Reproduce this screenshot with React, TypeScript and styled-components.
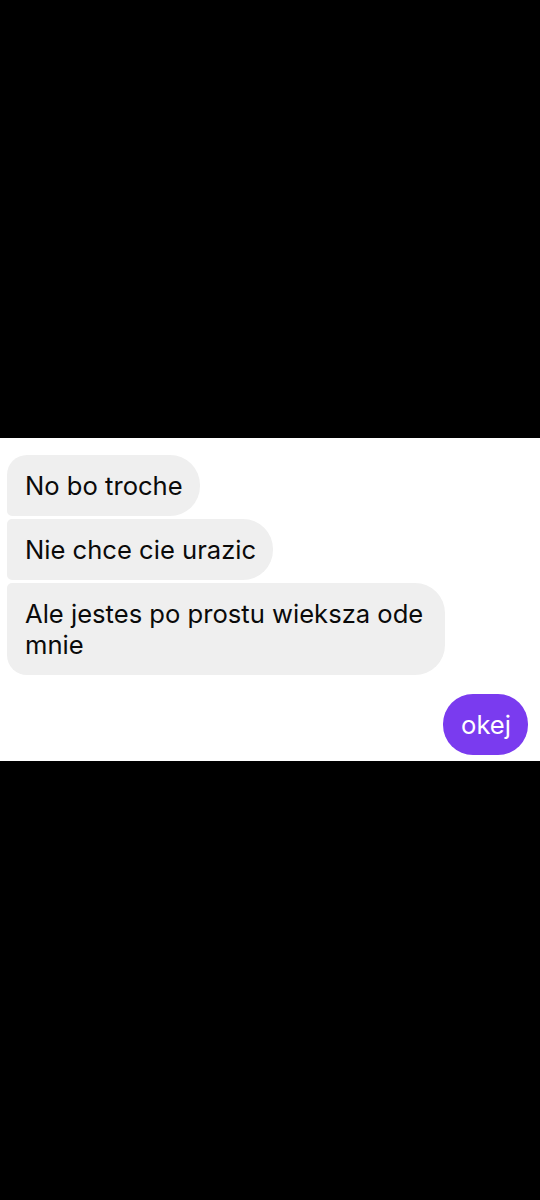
import React from "react";
import styled, { createGlobalStyle } from "styled-components";

const Global = createGlobalStyle`
  html, body { margin: 0; padding: 0; background: #000; }
  body { font-family: Inter, "Noto Sans", Roboto, sans-serif; }
`;

const Page = styled.div`
  width: 540px;
  height: 1200px;
  box-sizing: border-box;
  background: #000;
  padding-top: 438px;
`;

const Chat = styled.div`
  height: 323px;
  box-sizing: border-box;
  background: #fff;
  padding: 17px 12px 5px 7px;
  display: flex;
  flex-direction: column;
`;

const Group = styled.div`
  display: flex;
  flex-direction: column;
  align-items: flex-start;
  gap: 3px;
`;

type Pos = "first" | "middle" | "last" | "single";

const radii: Record<Pos, string> = {
  first: "20px 30px 30px 5px",
  middle: "5px 30px 30px 5px",
  last: "5px 30px 30px 20px",
  single: "30px",
};

const Bubble = styled.div<{ $pos: Pos; $mine?: boolean }>`
  box-sizing: border-box;
  max-width: 438px;
  padding: 15px 17px 15px 18px;
  font-size: 25.6px;
  line-height: 31px;
  color: ${(p) => (p.$mine ? "#fff" : "#0a0a0a")};
  background: ${(p) => (p.$mine ? "#7a3bef" : "#efefef")};
  border-radius: ${(p) => radii[p.$pos]};
`;

const MineRow = styled.div`
  display: flex;
  justify-content: flex-end;
  margin-top: 19px;
`;

export default function App() {
  return (
    <>
      <Global />
      <Page>
        <Chat>
          <Group>
            <Bubble $pos="first">No bo troche</Bubble>
            <Bubble $pos="middle">Nie chce cie urazic</Bubble>
            <Bubble $pos="last">Ale jestes po prostu wieksza ode mnie</Bubble>
          </Group>
          <MineRow>
            <Bubble $pos="single" $mine>
              okej
            </Bubble>
          </MineRow>
        </Chat>
      </Page>
    </>
  );
}
